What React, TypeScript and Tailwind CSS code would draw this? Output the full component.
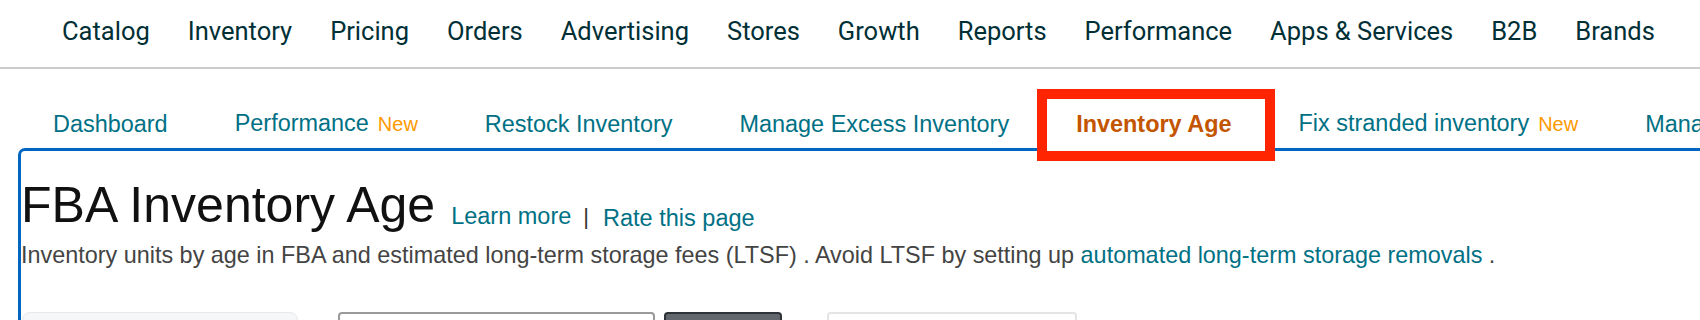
import React from "react";

const topNav = [
  "Catalog",
  "Inventory",
  "Pricing",
  "Orders",
  "Advertising",
  "Stores",
  "Growth",
  "Reports",
  "Performance",
  "Apps & Services",
  "B2B",
  "Brands",
];

type Tab = { label: string; isNew?: boolean; active?: boolean };

const tabs: Tab[] = [
  { label: "Dashboard" },
  { label: "Performance", isNew: true },
  { label: "Restock Inventory" },
  { label: "Manage Excess Inventory" },
  { label: "Inventory Age", active: true },
  { label: "Fix stranded inventory", isNew: true },
  { label: "Manage Inventory" },
];

function TabItem({ tab }: { tab: Tab }) {
  if (tab.active) {
    return (
      <span className="relative shrink-0">
        <span className="absolute -left-[39px] -right-[43px] -top-[22px] -bottom-[24px] border-[10px] border-[#fe2500] bg-white" />
        <span className="relative font-bold text-[#c45500]">{tab.label}</span>
      </span>
    );
  }
  return (
    <span className="shrink-0 flex items-baseline">
      <span className="text-[#007185]">{tab.label}</span>
      {tab.isNew && <span className="ml-[9px] text-[20px] text-[#ff9900]">New</span>}
    </span>
  );
}

export default function App() {
  return (
    <div className="w-[1700px] h-[320px] overflow-hidden bg-white font-['Liberation_Sans',Arial,sans-serif]">
      <div className="h-[69px] border-b-2 border-[#cccccc] flex items-center pl-[62px] gap-[38px] pb-[5px] font-['Roboto',sans-serif] text-[25.5px] text-[#002f36] whitespace-nowrap overflow-hidden">
        {topNav.map((item) => (
          <span key={item} className="shrink-0">
            {item}
          </span>
        ))}
      </div>

      <div className="relative z-10 h-[79px] flex items-end pb-[11px] pl-[53px] gap-[67px] text-[23.45px] leading-[26px] whitespace-nowrap">
        {tabs.map((tab) => (
          <TabItem key={tab.label} tab={tab} />
        ))}
      </div>

      <div className="ml-[18px] border-l-[3px] border-t-[3px] border-[#0066c0] rounded-tl-[7px] h-[200px]">
        <div className="mt-[26px] flex items-baseline whitespace-nowrap">
          <h1 className="text-[50px] leading-[56px] text-[#111111]">FBA Inventory Age</h1>
          <a className="ml-[16px] text-[23.5px] text-[#007185] translate-y-[2px]">Learn more</a>
          <span className="ml-[12px] text-[22px] text-[#333333] translate-y-[2px]">|</span>
          <a className="ml-[14px] text-[23.5px] text-[#007185] translate-y-[4px]">Rate this page</a>
        </div>
        <p className="mt-[9px] text-[23.4px] leading-[27px] text-[#444444] whitespace-nowrap">
          Inventory units by age in FBA and estimated long-term storage fees (LTSF) . Avoid LTSF by setting up{" "}
          <a className="text-[#007185]">automated long-term storage removals</a> .
        </p>
        <div className="mt-[43px] flex items-start">
          <div className="ml-[1px] w-[276px] h-[40px] rounded-[8px] border border-[#e6e8eb] bg-[#f6f7f9]" />
          <div className="ml-[40px] w-[317px] h-[36px] rounded-[4px] border-2 border-[#9a9a9a] bg-white" />
          <div className="ml-[9px] w-[118px] h-[36px] rounded-[4px] border-2 border-[#2e3236] bg-[#62676d]" />
          <div className="ml-[45px] w-[250px] h-[36px] rounded-[4px] border-2 border-[#e4e4e4] bg-white" />
        </div>
      </div>
    </div>
  );
}
